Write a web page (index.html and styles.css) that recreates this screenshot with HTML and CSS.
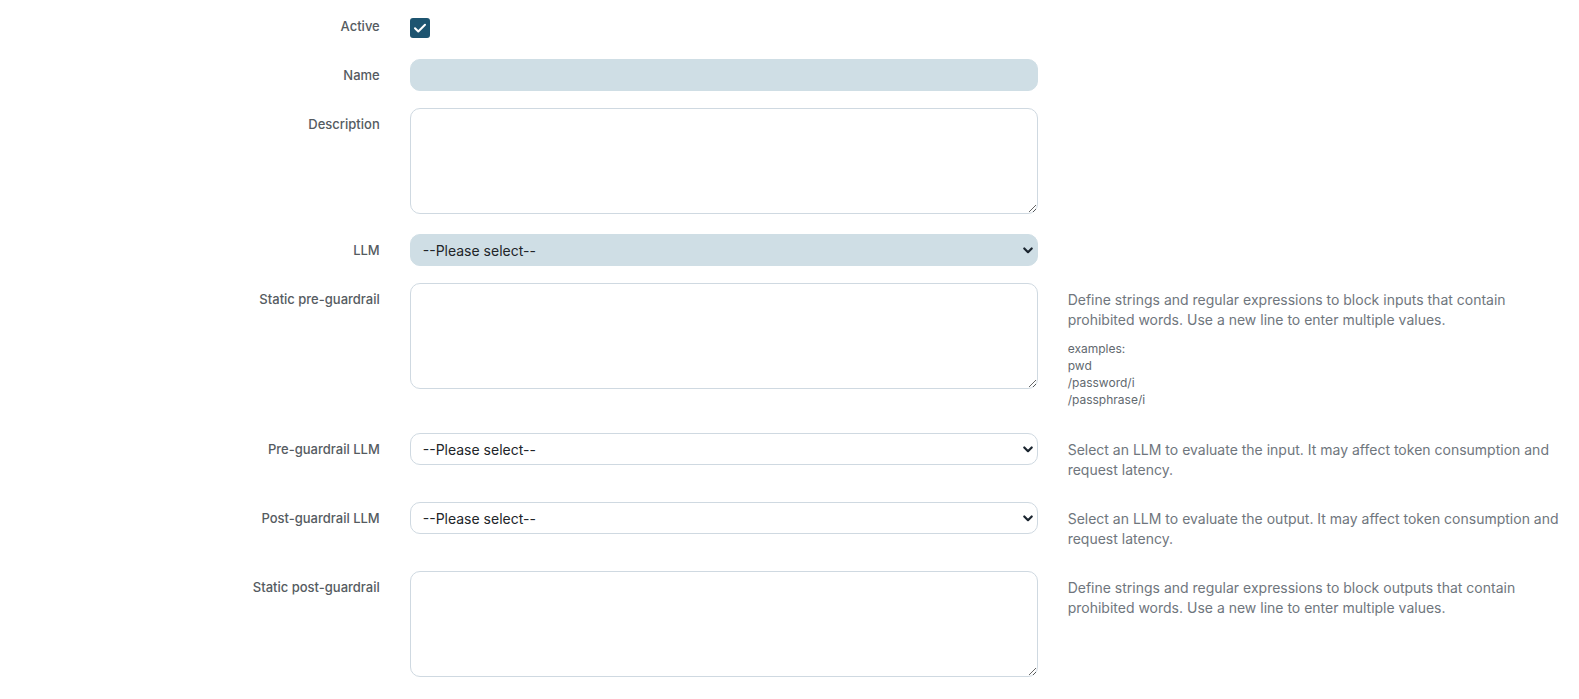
FILE: index.html
```html
<!doctype html>
<html lang="en">

<head>
  <title>Guardrail settings</title>
  <meta charset="utf-8" />
  <link rel="stylesheet" href="styles.css">
</head>

<body>
  <form class="settings">
    <div class="row row-check">
      <label class="col-label" for="active">Active</label>
      <div class="col-field">
        <input id="active" class="check" type="checkbox" checked />
      </div>
      <div class="col-help"></div>
    </div>

    <div class="row">
      <label class="col-label" for="name">Name</label>
      <div class="col-field">
        <input id="name" class="control filled" type="text" />
      </div>
      <div class="col-help"></div>
    </div>

    <div class="row">
      <label class="col-label" for="description">Description</label>
      <div class="col-field">
        <textarea id="description" class="control area"></textarea>
      </div>
      <div class="col-help"></div>
    </div>

    <div class="row">
      <label class="col-label" for="llm">LLM</label>
      <div class="col-field">
        <select id="llm" class="control picker filled">
          <option>--Please select--</option>
        </select>
      </div>
      <div class="col-help"></div>
    </div>

    <div class="row">
      <label class="col-label" for="pre-static">Static pre-guardrail</label>
      <div class="col-field">
        <textarea id="pre-static" class="control area"></textarea>
      </div>
      <div class="col-help">
        <p>Define strings and regular expressions to block inputs that contain prohibited words. Use a new line to enter multiple values.</p>
        <div class="examples">
          examples:<br />
          pwd<br />
          /password/i<br />
          /passphrase/i
        </div>
      </div>
    </div>

    <div class="row">
      <label class="col-label" for="pre-llm">Pre-guardrail LLM</label>
      <div class="col-field">
        <select id="pre-llm" class="control picker">
          <option>--Please select--</option>
        </select>
      </div>
      <div class="col-help">
        <p>Select an LLM to evaluate the input. It may affect token consumption and request latency.</p>
      </div>
    </div>

    <div class="row">
      <label class="col-label" for="post-llm">Post-guardrail LLM</label>
      <div class="col-field">
        <select id="post-llm" class="control picker">
          <option>--Please select--</option>
        </select>
      </div>
      <div class="col-help">
        <p>Select an LLM to evaluate the output. It may affect token consumption and request latency.</p>
      </div>
    </div>

    <div class="row">
      <label class="col-label" for="post-static">Static post-guardrail</label>
      <div class="col-field">
        <textarea id="post-static" class="control area"></textarea>
      </div>
      <div class="col-help">
        <p>Define strings and regular expressions to block outputs that contain prohibited words. Use a new line to enter multiple values.</p>
      </div>
    </div>
  </form>
</body>

</html>
```

FILE: styles.css
```css
html {
  font-family: Inter, "Noto Sans", sans-serif;
  color: #212529;
  background: #fff;
}

body {
  margin: 0;
}

.settings {
  padding-top: 18px;
}

.row {
  display: grid;
  grid-template-columns: 3fr 5fr 4fr;
  margin-bottom: 17px;
}

.col-label,
.col-field,
.col-help {
  padding: 0 15px;
}

.col-label {
  text-align: right;
  font-size: 13px;
  font-weight: 500;
  line-height: 20px;
  color: #555b61;
  padding-top: 6px;
}

.row-check .col-label {
  padding-top: 0;
  line-height: 16px;
}

.row-check .col-field {
  height: 24px;
}

.col-help {
  font-size: 14px;
  line-height: 20px;
  color: #6f767d;
  padding-top: 7px;
  padding-bottom: 5px;
}

.col-help:empty {
  padding: 0;
}

.col-help p {
  margin: 0;
}

.examples {
  font-size: 12px;
  line-height: 17px;
  color: #62696f;
  margin: 10px 0 3px;
}

.check {
  appearance: none;
  margin: 0;
  width: 20px;
  height: 20px;
  border-radius: 3px;
  background: #1d5470 url("data:image/svg+xml,%3Csvg xmlns='http://www.w3.org/2000/svg' width='20' height='20' viewBox='0 0 20 20'%3E%3Cpath d='M5 10.2l3.3 3.3L15 6.8' fill='none' stroke='%23fff' stroke-width='2' stroke-linecap='round' stroke-linejoin='round'/%3E%3C/svg%3E") no-repeat center;
  display: block;
}

.control {
  box-sizing: border-box;
  display: block;
  width: 100%;
  height: 32px;
  margin: 0;
  padding: 0 12px;
  font-family: inherit;
  font-size: 14px;
  color: #212529;
  background-color: #fff;
  border: 1px solid #cfd9e1;
  border-radius: 10px;
  outline: none;
}

.control.filled {
  background-color: #cfdee5;
  border-color: #cfdee5;
}

.area {
  height: 106px;
  padding: 6px 12px;
  resize: vertical;
  margin-bottom: 3px;
}

.picker {
  appearance: none;
  padding-right: 24px;
  background-image: url("data:image/svg+xml,%3Csvg xmlns='http://www.w3.org/2000/svg' width='10' height='7' viewBox='0 0 10 7'%3E%3Cpath d='M1.3 1.5L5 5.2l3.7-3.7' fill='none' stroke='%231c2630' stroke-width='2.2' stroke-linecap='round' stroke-linejoin='round'/%3E%3C/svg%3E");
  background-repeat: no-repeat;
  background-position: right 4px center;
  background-size: 10px 7px;
}
```
